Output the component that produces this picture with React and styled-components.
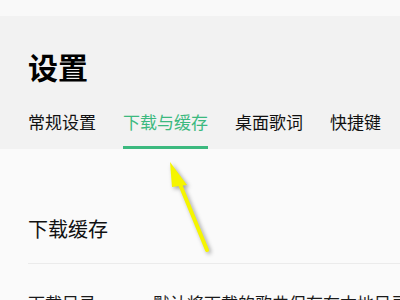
import styled, { createGlobalStyle } from 'styled-components';

const GlobalStyle = createGlobalStyle`
  body {
    margin: 0;
    background-color: #fafafa;
    font-family: "Noto Sans CJK SC", "Noto Sans", sans-serif;
    color: #1a1a1a;
    overflow: hidden;
  }
`;

const Page = styled.div`
  position: relative;
  width: 400px;
  height: 300px;
  overflow: hidden;
  background-color: #fafafa;
`;

const TopStrip = styled.div`
  height: 16px;
  background-color: #f9f9f9;
`;

const Header = styled.div`
  background-color: #f2f2f2;
  padding: 34px 0 0 28px;
`;

const Title = styled.h1`
  margin: 0;
  font-size: 30px;
  line-height: 32px;
  font-weight: 700;
  color: #000;
`;

const Tabs = styled.div`
  display: flex;
  gap: 27px;
  margin-top: 31px;
`;

const Tab = styled.div`
  font-size: 17px;
  line-height: 17px;
  padding-bottom: 16px;
  white-space: nowrap;
  color: ${(props) => (props.active ? '#3cb97f' : '#111')};
  border-bottom: 3px solid ${(props) => (props.active ? '#3cb97f' : 'transparent')};
`;

const Content = styled.div`
  padding: 70px 0 0 28px;
`;

const SectionTitle = styled.h2`
  margin: 0;
  font-size: 20px;
  line-height: 20px;
  font-weight: 400;
  color: #111;
`;

const Divider = styled.div`
  height: 1px;
  margin-top: 24px;
  background-color: #ebebeb;
`;

const Row = styled.div`
  display: flex;
  margin-top: 30px;
  font-size: 17px;
  line-height: 17px;
  white-space: nowrap;
`;

const Label = styled.span`
  width: 125px;
  flex-shrink: 0;
`;

const Arrow = styled.svg`
  position: absolute;
  left: 160px;
  top: 155px;
  filter: drop-shadow(2px 2px 2px rgba(0, 0, 0, 0.35));
`;

export default function App() {
  return (
    <Page>
      <GlobalStyle />
      <TopStrip />
      <Header>
        <Title>设置</Title>
        <Tabs>
          <Tab>常规设置</Tab>
          <Tab active>下载与缓存</Tab>
          <Tab>桌面歌词</Tab>
          <Tab>快捷键</Tab>
        </Tabs>
      </Header>
      <Content>
        <SectionTitle>下载缓存</SectionTitle>
        <Divider />
        <Row>
          <Label>下载目录</Label>
          <span>默认将下载的歌曲保存在本地目录中</span>
        </Row>
      </Content>
      <Arrow width="60" height="105" viewBox="0 0 60 105">
        <line x1="47" y1="95" x2="17" y2="22" stroke="#f5f500" strokeWidth="4" strokeLinecap="round" />
        <polygon points="10,7 27,30 12,32" fill="#f5f500" />
      </Arrow>
    </Page>
  );
}
